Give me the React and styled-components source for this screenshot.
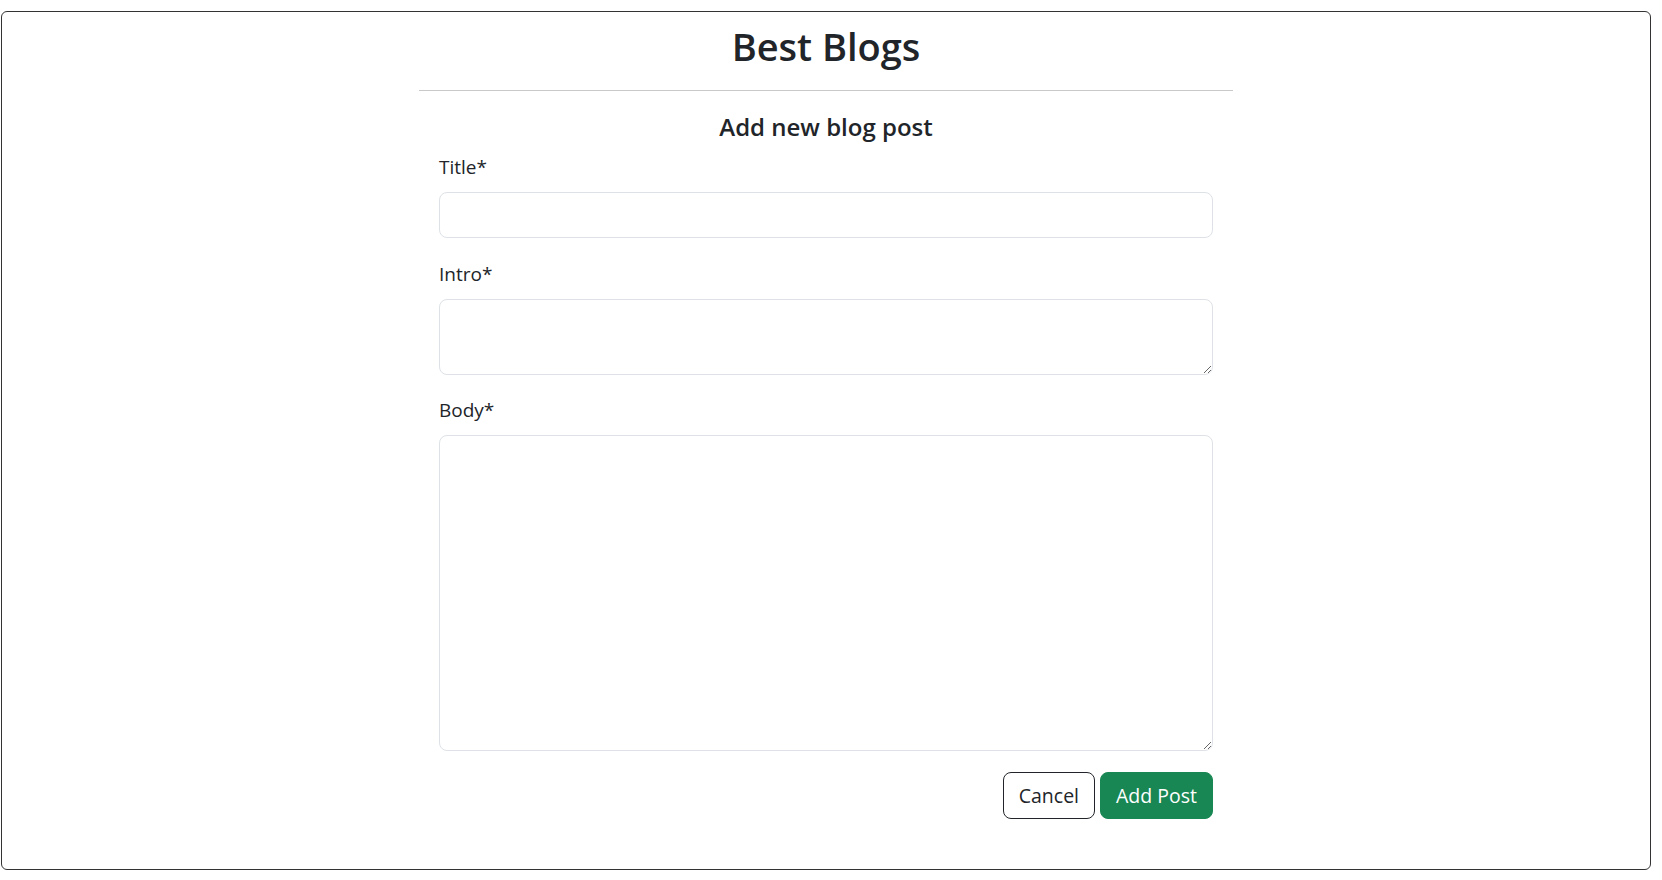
import * as React from "react";
import styled, { createGlobalStyle } from "styled-components";

const GlobalStyle = createGlobalStyle`
  *, *::before, *::after {
    box-sizing: border-box;
  }
  body {
    margin: 0;
    background: #fff;
    color: #212529;
    font-family: "Open Sans", "Noto Sans", sans-serif;
  }
`;

const Page = styled("div")`
  padding: 11px 11px 11px 1px;
`;

const Frame = styled("div")`
  height: 859px;
  border: 1px solid #333;
  border-radius: 6px;
  display: flex;
  flex-flow: column nowrap;
  align-items: center;
  padding-top: 10px;
`;

const Content = styled("main")`
  width: 814px;
`;

const Heading = styled("h1")`
  margin: 0;
  font-size: 38px;
  line-height: 48px;
  font-weight: 600;
  text-align: center;
`;

const Rule = styled("hr")`
  margin: 20px 0 0;
  border: 0;
  border-top: 1px solid #c9c9c9;
`;

const Form = styled("form")`
  padding: 0 20px;
`;

const Subtitle = styled("h4")`
  margin: 21px 0 11px;
  font-size: 24px;
  line-height: 29px;
  font-weight: 600;
  text-align: center;
`;

const Field = styled("div")`
  margin-bottom: ${({ $gap }) => $gap}px;
`;

const Label = styled("label")`
  display: block;
  margin-bottom: 10px;
  font-size: 19px;
  line-height: 30px;
`;

const Input = styled("input")`
  display: block;
  width: 100%;
  height: 46px;
  padding: 8px 16px;
  font: inherit;
  font-size: 19px;
  color: #212529;
  border: 1px solid #dee2e6;
  border-radius: 8px;
  outline: none;
`;

const TextArea = styled("textarea")`
  display: block;
  width: 100%;
  height: ${({ $height }) => $height}px;
  padding: 8px 16px;
  font: inherit;
  font-size: 19px;
  color: #212529;
  border: 1px solid #dee2e6;
  border-radius: 8px;
  outline: none;
  resize: vertical;
`;

const Actions = styled("div")`
  display: flex;
  justify-content: flex-end;
  gap: 5px;
`;

const Button = styled("button")`
  height: 47px;
  padding: 0 15px;
  font: inherit;
  font-size: 19.5px;
  line-height: 29px;
  border-radius: 8px;
  cursor: pointer;
  border: 1px solid ${({ $primary }) => ($primary ? "#198754" : "#212529")};
  background: ${({ $primary }) => ($primary ? "#198754" : "#fff")};
  color: ${({ $primary }) => ($primary ? "#fff" : "#212529")};
`;

export default function App() {
  return (
    <>
      <GlobalStyle />
      <Page>
        <Frame>
          <Content>
            <Heading>Best Blogs</Heading>
            <Rule />
            <Form onSubmit={(e) => e.preventDefault()}>
              <Subtitle>Add new blog post</Subtitle>
              <Field $gap={21}>
                <Label htmlFor="title">Title*</Label>
                <Input id="title" type="text" />
              </Field>
              <Field $gap={20}>
                <Label htmlFor="intro">Intro*</Label>
                <TextArea id="intro" $height={76} />
              </Field>
              <Field $gap={21}>
                <Label htmlFor="body">Body*</Label>
                <TextArea id="body" $height={316} />
              </Field>
              <Actions>
                <Button type="button">Cancel</Button>
                <Button type="submit" $primary>
                  Add Post
                </Button>
              </Actions>
            </Form>
          </Content>
        </Frame>
      </Page>
    </>
  );
}
